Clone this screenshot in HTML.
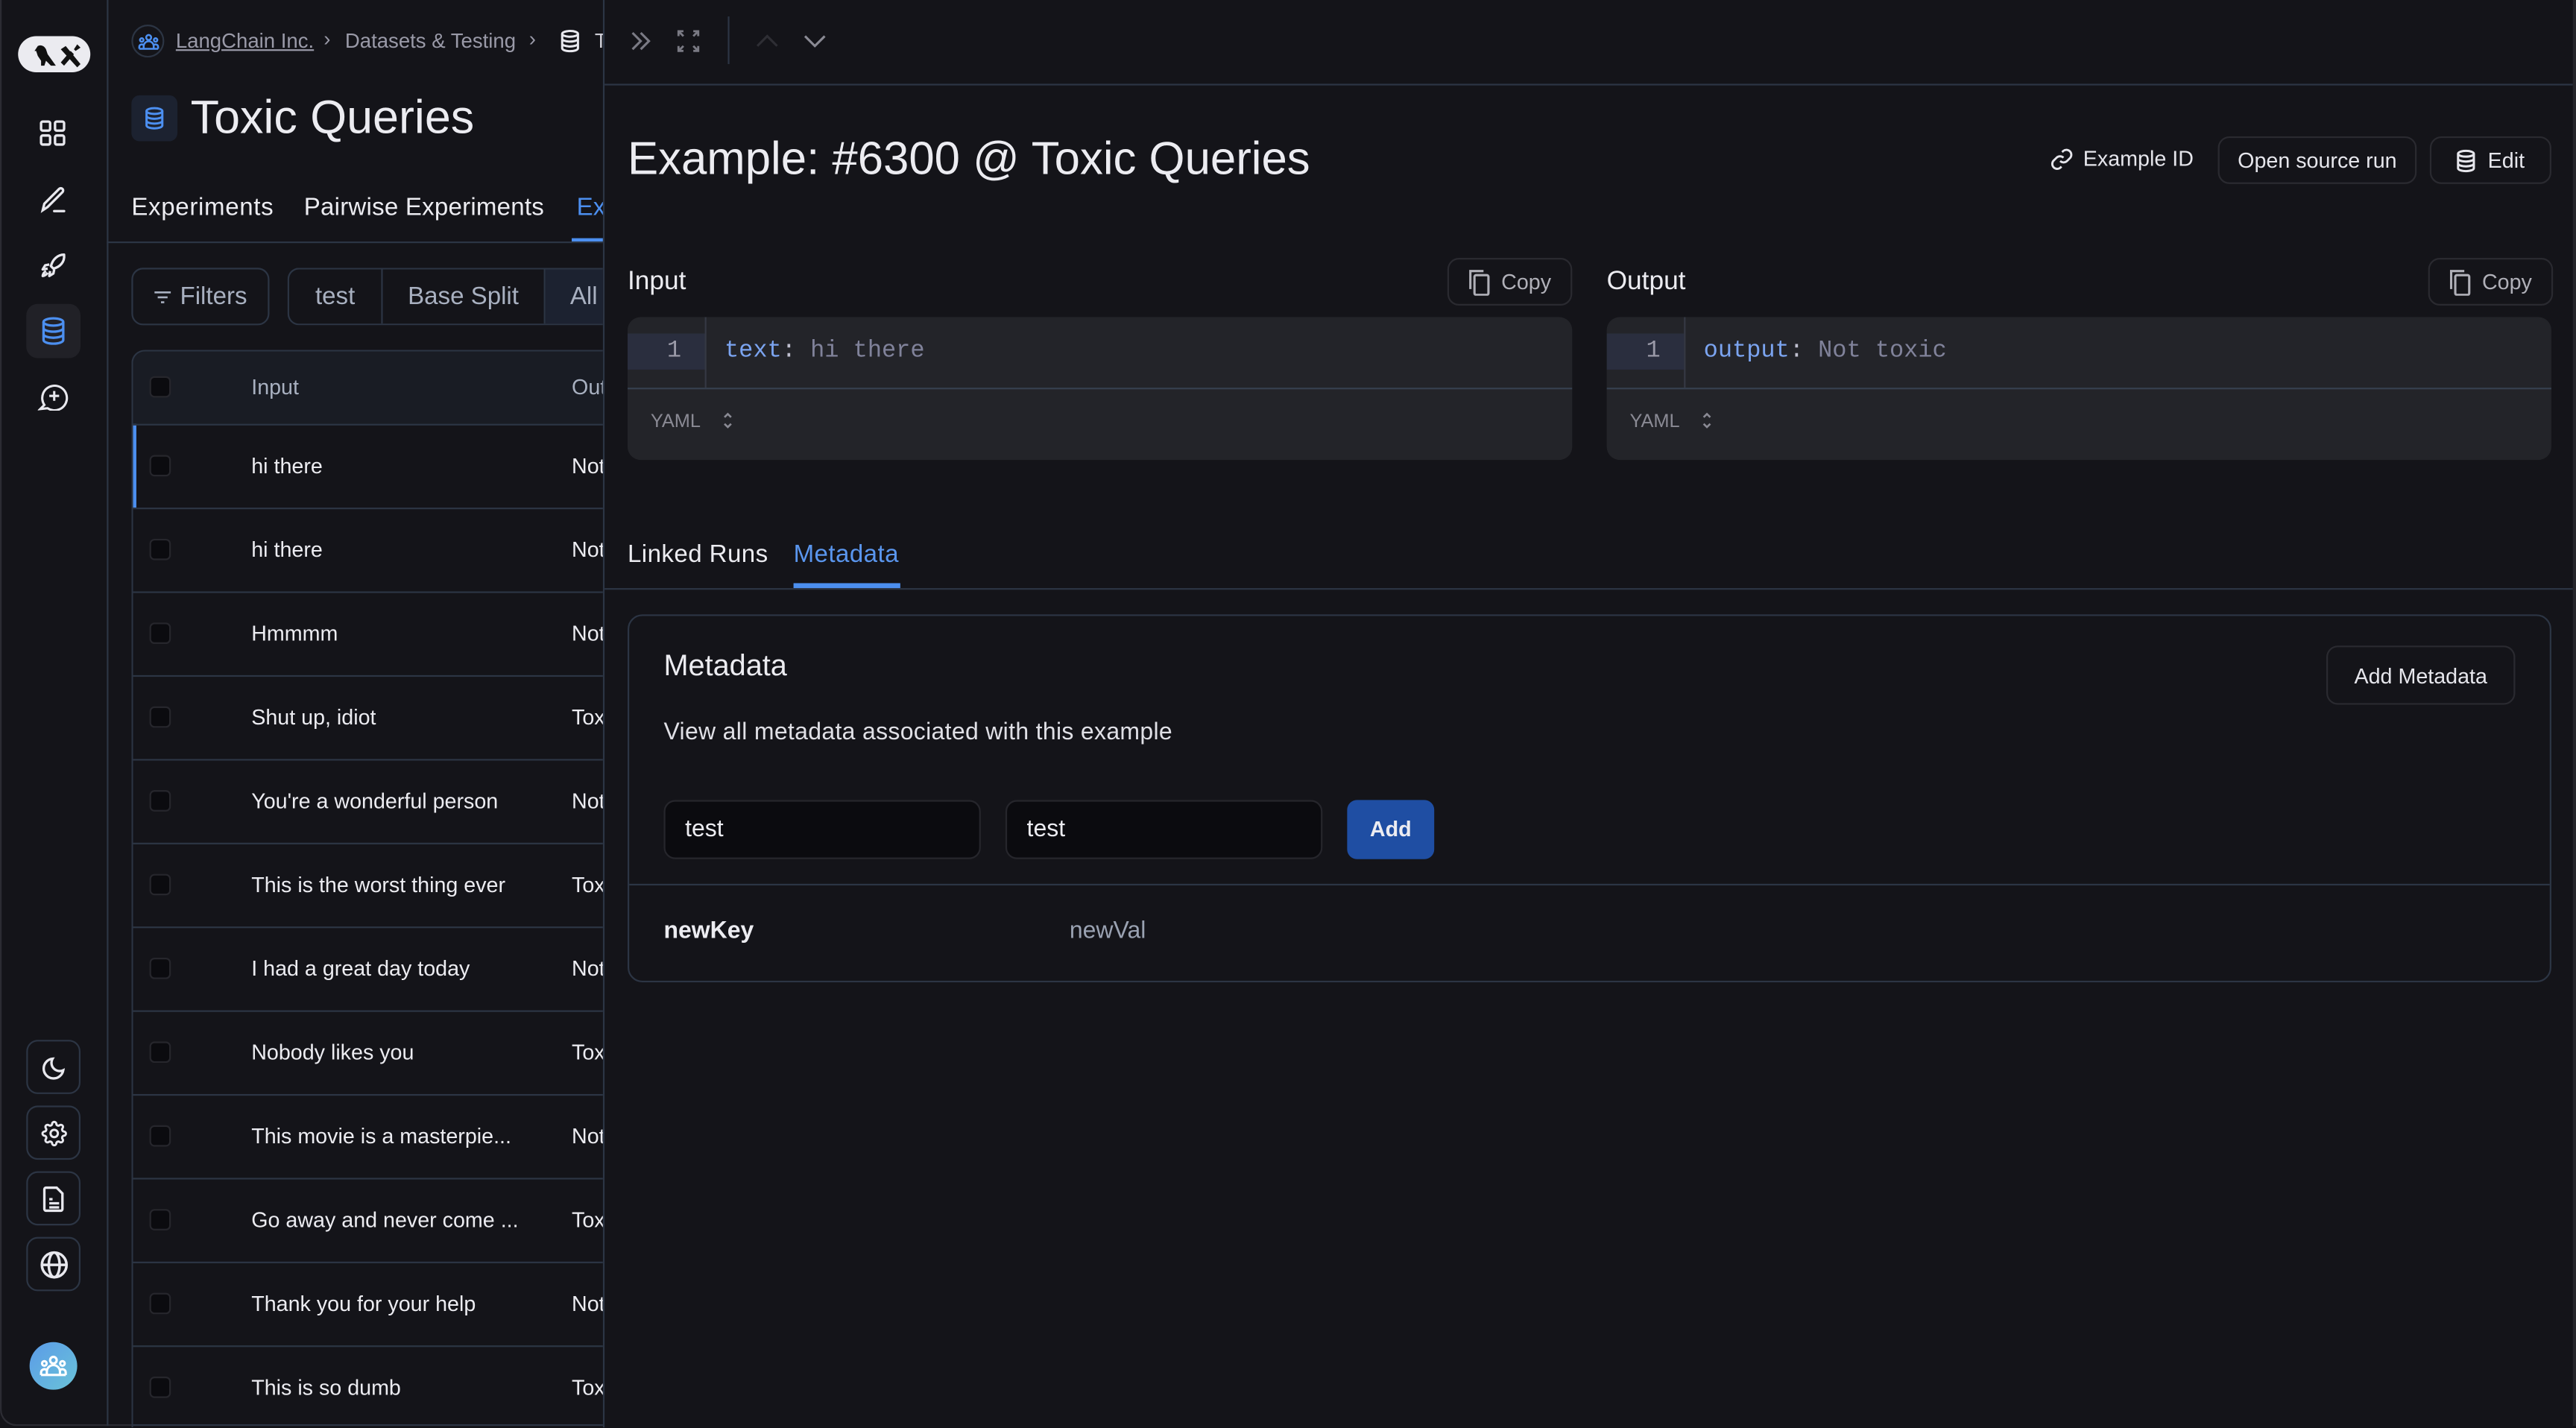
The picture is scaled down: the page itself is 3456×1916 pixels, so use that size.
<!DOCTYPE html>
<html><head><meta charset="utf-8"><style>
*{box-sizing:border-box;margin:0;padding:0}
html,body{width:3456px;height:1916px;overflow:hidden;background:#141419}
#w{position:absolute;left:0;top:0;width:1568px;height:869px;transform:scale(2.2041);transform-origin:0 0;background:#141419;font-family:"Liberation Sans",sans-serif;color:#ececf1;overflow:hidden}
.a{position:absolute;white-space:nowrap}
.ln{position:absolute;background:#2c3544}
.btn{position:absolute;border:1px solid #2a2a30;border-radius:7px;font-size:13px;color:#e6e6ec;display:flex;align-items:center;justify-content:center;gap:7px;white-space:nowrap}
.ib{position:absolute;left:16px;width:33px;height:33px;border:1px solid #2c3544;border-radius:7px;display:flex;align-items:center;justify-content:center}
.cb{position:absolute;left:91px;width:13px;height:13px;border:1px solid #26262c;border-radius:3px;background:#0b0b0f}
.row{position:absolute;left:81px;width:286px;height:51px;border-top:1px solid #2c3544;font-size:13px;white-space:nowrap;overflow:hidden}
.row .t{position:absolute;left:72px;top:17px}
.row .o{position:absolute;left:267px;top:17px}
.mono{font-family:"Liberation Mono",monospace}
svg{display:block}
</style></head><body><div id="w">

<div class="a" style="left:0;top:-10px;width:1566px;height:878px;border:1px solid #2c2c33;border-radius:0 0 0 10px"></div>
<div class="a" style="left:1566px;top:0;width:2px;height:868px;background:#26262b"></div>

<!-- sidebar -->
<div class="ln" style="left:65px;top:0;width:1px;height:868px"></div>
<div class="a" style="left:11px;top:22px;width:44px;height:22px;border-radius:11px;background:#ebebf0"><svg width="44" height="22" viewBox="0 0 44 22"><path d="M12 6c2-1 4 0 5 2l1 3 5 7h-3l-3-3-1 3h-2l0-3-2-3-1-3-1 0z" fill="#111"/><path d="M26 8l3-2 9 11-2 2zM36 5l-2 3 1 1 3-2zM26 16l6-7 2 2-6 7z" fill="#111"/></svg></div>
<div class="a" style="left:24px;top:73px"><svg width="16" height="16" viewBox="0 0 16 16" fill="none" stroke="#e8e8ee" stroke-width="1.5"><rect x="1" y="1" width="5.5" height="5.5" rx="1"/><rect x="9.5" y="1" width="5.5" height="5.5" rx="1"/><rect x="1" y="9.5" width="5.5" height="5.5" rx="1"/><rect x="9.5" y="9.5" width="5.5" height="5.5" rx="1"/></svg></div>
<div class="a" style="left:24px;top:113px"><svg width="17" height="17" viewBox="0 0 17 17" fill="none" stroke="#e8e8ee" stroke-width="1.5" stroke-linecap="round"><path d="M2 15l1-4 9-9a1.4 1.4 0 012 2l-9 9z"/><path d="M9 15.5h6"/></svg></div>
<div class="a" style="left:24px;top:153px"><svg width="17" height="17" viewBox="0 0 17 17" fill="none" stroke="#e8e8ee" stroke-width="1.5" stroke-linejoin="round"><path d="M15 2c-4 0-7 3-8 7l1.5 1.5c4-1 7-4 6.5-8.5z"/><path d="M6 8L3.5 8.5 2 11l3-.5"/><path d="M9 11l-.5 2.5L6 15l.5-3"/><path d="M4 12c-1 .5-2 2-2 3 1 0 2.5-1 3-2"/></svg></div>
<div class="a" style="left:16px;top:185px;width:33px;height:33px;border-radius:7px;background:#212127"></div>
<div class="a" style="left:25px;top:193px"><svg width="15" height="17" viewBox="0 0 15 17" fill="none" stroke="#4c8ff0" stroke-width="1.5"><ellipse cx="7.5" cy="3" rx="6" ry="2.2"/><path d="M1.5 3v11c0 1.2 2.7 2.2 6 2.2s6-1 6-2.2V3M1.5 6.7c0 1.2 2.7 2.2 6 2.2s6-1 6-2.2M1.5 10.4c0 1.2 2.7 2.2 6 2.2s6-1 6-2.2"/></svg></div>
<div class="a" style="left:23px;top:232px"><svg width="19" height="18" viewBox="0 0 19 18" fill="none" stroke="#e8e8ee" stroke-width="1.4"><path d="M4 14.5A7.5 7.5 0 1 1 6 16.5L1.5 17z"/><path d="M10 6v6M7 9h6"/></svg></div>

<div class="ib" style="top:633px"><svg width="16" height="16" viewBox="0 0 16 16" fill="none" stroke="#e8e8ee" stroke-width="1.5"><path d="M13.5 9.5A6 6 0 1 1 7 2.5a5 5 0 0 0 6.5 7z"/></svg></div>
<div class="ib" style="top:673px"><svg width="18" height="18" viewBox="0 0 24 24" fill="none" stroke="#e8e8ee" stroke-width="1.8"><path d="M10.3 4.3a1.7 1.7 0 013.4 0 1.7 1.7 0 002.6 1.1 1.7 1.7 0 012.4 2.4 1.7 1.7 0 001.1 2.6 1.7 1.7 0 010 3.4 1.7 1.7 0 00-1.1 2.6 1.7 1.7 0 01-2.4 2.4 1.7 1.7 0 00-2.6 1.1 1.7 1.7 0 01-3.4 0 1.7 1.7 0 00-2.6-1.1 1.7 1.7 0 01-2.4-2.4 1.7 1.7 0 00-1.1-2.6 1.7 1.7 0 010-3.4 1.7 1.7 0 001.1-2.6 1.7 1.7 0 012.4-2.4 1.7 1.7 0 002.6-1.1z"/><circle cx="12" cy="12" r="3"/></svg></div>
<div class="ib" style="top:713px"><svg width="14" height="16" viewBox="0 0 14 16" fill="none" stroke="#e8e8ee" stroke-width="1.5"><path d="M2 1h6.5L12 4.5V14a1 1 0 01-1 1H2a1 1 0 01-1-1V2a1 1 0 011-1z"/><path d="M4 8h2M4 10.5h6M4 13h6"/></svg></div>
<div class="ib" style="top:753px"><svg width="18" height="18" viewBox="0 0 18 18" fill="none" stroke="#e8e8ee" stroke-width="1.6"><circle cx="9" cy="9" r="7.5"/><ellipse cx="9" cy="9" rx="3.3" ry="7.5"/><path d="M1.5 9h15"/></svg></div>
<div class="a" style="left:18px;top:817px;width:29px;height:29px;border-radius:50%;background:linear-gradient(135deg,#5b9be8,#6ac3d8);display:flex;align-items:center;justify-content:center"><svg width="17" height="13" viewBox="0 0 17 13" fill="none" stroke="#fff" stroke-width="1.4"><circle cx="8.5" cy="3" r="2"/><circle cx="3" cy="5" r="1.4"/><circle cx="14" cy="5" r="1.4"/><path d="M4.5 12V10a4 4 0 018 0v2zM1 12v-1.5a2 2 0 013.5-1.3M16 12v-1.5a2 2 0 00-3.5-1.3M1 12h15"/></svg></div>

<!-- middle panel -->
<div class="a" style="left:80px;top:15px;width:20px;height:20px;border:1px solid #2c3544;border-radius:50%;display:flex;align-items:center;justify-content:center"><svg width="13" height="11" viewBox="0 0 17 13" fill="none" stroke="#4c8ff0" stroke-width="1.5"><circle cx="8.5" cy="3" r="2"/><circle cx="3" cy="5" r="1.4"/><circle cx="14" cy="5" r="1.4"/><path d="M4.5 12V10a4 4 0 018 0v2zM1 12v-1.5a2 2 0 013.5-1.3M16 12v-1.5a2 2 0 00-3.5-1.3M1 12h15"/></svg></div>
<div class="a" style="left:107px;top:18px;font-size:12.5px;color:#9a9aa8;text-decoration:underline">LangChain Inc.</div>
<div class="a" style="left:197px;top:17px;font-size:12.5px;color:#9a9aa8">›</div>
<div class="a" style="left:210px;top:18px;font-size:12.5px;color:#9a9aa8">Datasets &amp; Testing</div>
<div class="a" style="left:322px;top:17px;font-size:12.5px;color:#9a9aa8">›</div>
<div class="a" style="left:341px;top:18px"><svg width="12" height="14" viewBox="0 0 15 17" fill="none" stroke="#e8e8ee" stroke-width="1.7"><ellipse cx="7.5" cy="3" rx="6" ry="2.2"/><path d="M1.5 3v11c0 1.2 2.7 2.2 6 2.2s6-1 6-2.2V3M1.5 6.7c0 1.2 2.7 2.2 6 2.2s6-1 6-2.2M1.5 10.4c0 1.2 2.7 2.2 6 2.2s6-1 6-2.2"/></svg></div>
<div class="a" style="left:362px;top:18px;font-size:12.5px;color:#ccccd4">Toxic</div>
<div class="a" style="left:80px;top:58px;width:28px;height:28px;border-radius:5px;background:#1c2230;display:flex;align-items:center;justify-content:center"><svg width="12" height="14" viewBox="0 0 15 17" fill="none" stroke="#4c8ff0" stroke-width="1.7"><ellipse cx="7.5" cy="3" rx="6" ry="2.2"/><path d="M1.5 3v11c0 1.2 2.7 2.2 6 2.2s6-1 6-2.2V3M1.5 6.7c0 1.2 2.7 2.2 6 2.2s6-1 6-2.2M1.5 10.4c0 1.2 2.7 2.2 6 2.2s6-1 6-2.2"/></svg></div>
<div class="a" style="left:116px;top:56px;font-size:28.5px;font-weight:500">Toxic Queries</div>
<div class="a" style="left:80px;top:118px;font-size:15px;letter-spacing:.3px">Experiments</div>
<div class="a" style="left:185px;top:118px;font-size:15px;letter-spacing:.1px">Pairwise Experiments</div>
<div class="a" style="left:351px;top:118px;font-size:15px;color:#4c8ff0">Examples</div>
<div class="ln" style="left:65px;top:147px;width:302px;height:1px"></div>
<div class="a" style="left:348px;top:145px;width:20px;height:2px;background:#4c8ff0"></div>
<div class="a" style="left:80px;top:163px;width:84px;height:35px;border:1px solid #2c3544;border-radius:7px;font-size:15px;color:#a8b0c0;display:flex;align-items:center;justify-content:center;gap:6px"><svg width="10" height="8" viewBox="0 0 10 8" stroke="#a8b0c0" stroke-width="1.2"><path d="M0 1h10M2 4h6M4 7h2"/></svg>Filters</div>
<div class="a" style="left:175px;top:163px;width:192px;height:35px;border:1px solid #2c3544;border-right:none;border-radius:7px 0 0 7px;overflow:hidden;font-size:15px;color:#a8b0c0">
 <div class="a" style="left:0;top:0;width:57px;height:33px;border-right:1px solid #2c3544;text-align:center;line-height:33px">test</div>
 <div class="a" style="left:57px;top:0;width:99px;height:33px;border-right:1px solid #2c3544;text-align:center;line-height:33px">Base Split</div>
 <div class="a" style="left:156px;top:0;width:40px;height:33px;background:#1c2230;padding-left:15px;line-height:33px">All</div>
</div>
<div class="a" style="left:80px;top:213px;width:287px;height:656px;border:1px solid #2c3544;border-right:none;border-bottom:none;border-radius:8px 0 0 0;overflow:hidden">
 <div class="a" style="left:0;top:0;width:287px;height:45px;background:#191c24"></div>
</div>
<div class="cb" style="top:229px"></div>
<div class="a" style="left:153px;top:228px;font-size:13px;color:#a8b0c0">Input</div>
<div class="a" style="left:348px;top:228px;font-size:13px;color:#a8b0c0;width:19px;overflow:hidden">Output</div>
<div class="a" style="left:81px;top:258px;width:2px;height:51px;background:#4c8ff0"></div>
<div class="row" style="top:258px"><div class="cb" style="left:10px;top:18px"></div><span class="t">hi there</span><span class="o">Not toxic</span></div>
<div class="row" style="top:309px"><div class="cb" style="left:10px;top:18px"></div><span class="t">hi there</span><span class="o">Not toxic</span></div>
<div class="row" style="top:360px"><div class="cb" style="left:10px;top:18px"></div><span class="t">Hmmmm</span><span class="o">Not toxic</span></div>
<div class="row" style="top:411px"><div class="cb" style="left:10px;top:18px"></div><span class="t">Shut up, idiot</span><span class="o">Toxic</span></div>
<div class="row" style="top:462px"><div class="cb" style="left:10px;top:18px"></div><span class="t">You're a wonderful person</span><span class="o">Not toxic</span></div>
<div class="row" style="top:513px"><div class="cb" style="left:10px;top:18px"></div><span class="t">This is the worst thing ever</span><span class="o">Toxic</span></div>
<div class="row" style="top:564px"><div class="cb" style="left:10px;top:18px"></div><span class="t">I had a great day today</span><span class="o">Not toxic</span></div>
<div class="row" style="top:615px"><div class="cb" style="left:10px;top:18px"></div><span class="t">Nobody likes you</span><span class="o">Toxic</span></div>
<div class="row" style="top:666px"><div class="cb" style="left:10px;top:18px"></div><span class="t">This movie is a masterpie...</span><span class="o">Not toxic</span></div>
<div class="row" style="top:717px"><div class="cb" style="left:10px;top:18px"></div><span class="t">Go away and never come ...</span><span class="o">Toxic</span></div>
<div class="row" style="top:768px"><div class="cb" style="left:10px;top:18px"></div><span class="t">Thank you for your help</span><span class="o">Not toxic</span></div>
<div class="row" style="top:819px;height:48px"><div class="cb" style="left:10px;top:18px"></div><span class="t">This is so dumb</span><span class="o">Toxic</span></div>
<div class="ln" style="left:81px;top:867px;width:286px;height:1px"></div>

<!-- right panel -->
<div class="a" style="left:367px;top:0;width:1199px;height:869px;background:#141419;border-left:1px solid #2c3544"></div>
<div class="ln" style="left:368px;top:51px;width:1198px;height:1px"></div>
<div class="a" style="left:383px;top:18px"><svg width="14" height="14" viewBox="0 0 14 14" fill="none" stroke="#7a7a84" stroke-width="1.4"><path d="M2 2l5 5-5 5M7 2l5 5-5 5"/></svg></div>
<div class="a" style="left:412px;top:18px"><svg width="14" height="14" viewBox="0 0 14 14" fill="none" stroke="#7a7a84" stroke-width="1.3"><path d="M1 4V1h3M1 1l3 3M13 4V1h-3M13 1l-3 3M1 10v3h3M1 13l3-3M13 10v3h-3M13 13l-3-3"/></svg></div>
<div class="a" style="left:443px;top:10px;width:1px;height:29px;background:#2c3544"></div>
<div class="a" style="left:460px;top:21px"><svg width="14" height="8" viewBox="0 0 14 8" fill="none" stroke="#2e2e34" stroke-width="1.4"><path d="M1 7l6-6 6 6"/></svg></div>
<div class="a" style="left:489px;top:21px"><svg width="14" height="8" viewBox="0 0 14 8" fill="none" stroke="#8a8a94" stroke-width="1.4"><path d="M1 1l6 6 6-6"/></svg></div>

<div class="a" style="left:382px;top:81px;font-size:28px;font-weight:500">Example: #6300 @ Toxic Queries</div>
<div class="a" style="left:1248px;top:89px;font-size:13px;color:#e6e6ec;display:flex;gap:6px;align-items:center"><svg width="14" height="14" viewBox="0 0 14 14" fill="none" stroke="#e6e6ec" stroke-width="1.3"><path d="M6 8a3 3 0 004.2 0l2-2a3 3 0 00-4.2-4.2L7.2 2.6M8 6a3 3 0 00-4.2 0l-2 2A3 3 0 006 12.2l.8-.8"/></svg>Example ID</div>
<div class="btn" style="left:1350px;top:83px;width:121px;height:29px">Open source run</div>
<div class="btn" style="left:1479px;top:83px;width:74px;height:29px"><svg width="12" height="14" viewBox="0 0 15 17" fill="none" stroke="#e6e6ec" stroke-width="1.7"><ellipse cx="7.5" cy="3" rx="6" ry="2.2"/><path d="M1.5 3v11c0 1.2 2.7 2.2 6 2.2s6-1 6-2.2V3M1.5 6.7c0 1.2 2.7 2.2 6 2.2s6-1 6-2.2M1.5 10.4c0 1.2 2.7 2.2 6 2.2s6-1 6-2.2"/></svg>Edit</div>

<!-- input -->
<div class="a" style="left:382px;top:163px;font-size:16px">Input</div>
<div class="btn" style="left:881px;top:157px;width:76px;height:29px;color:#b0b0b8"><svg width="13" height="16" viewBox="0 0 13 16" fill="none" stroke="#b0b0b8" stroke-width="1.4"><path d="M1 12V1h8"/><rect x="3.5" y="3.5" width="8.5" height="12" rx="1"/></svg>Copy</div>
<div class="a" style="left:382px;top:193px;width:575px;height:87px;background:#232429;border-radius:8px;overflow:hidden">
 <div class="a" style="left:0;top:10px;width:47px;height:22px;background:#2a2e3e"></div>
 <div class="a" style="left:47px;top:0;width:1px;height:43px;background:#353843"></div>
 <div class="a mono" style="left:24px;top:13px;font-size:14.5px;color:#9a9aa8">1</div>
 <div class="a mono" style="left:59px;top:13px;font-size:14.5px;white-space:pre"><span style="color:#7ba4f0">text</span><span style="color:#c0c0d0">:</span><span style="color:#80829a"> hi there</span></div>
 <div class="a" style="left:0;top:43px;width:575px;height:1px;background:#36404f"></div>
 <div class="a" style="left:14px;top:58px;font-size:11.5px;color:#8a8a94">YAML</div>
 <div class="a" style="left:58px;top:57px"><svg width="6" height="12" viewBox="0 0 6 12" fill="none" stroke="#8a8a94" stroke-width="1.2"><path d="M1 4l2-2 2 2M1 8l2 2 2-2"/></svg></div>
</div>
<!-- output -->
<div class="a" style="left:978px;top:163px;font-size:16px">Output</div>
<div class="btn" style="left:1478px;top:157px;width:76px;height:29px;color:#b0b0b8"><svg width="13" height="16" viewBox="0 0 13 16" fill="none" stroke="#b0b0b8" stroke-width="1.4"><path d="M1 12V1h8"/><rect x="3.5" y="3.5" width="8.5" height="12" rx="1"/></svg>Copy</div>
<div class="a" style="left:978px;top:193px;width:575px;height:87px;background:#232429;border-radius:8px;overflow:hidden">
 <div class="a" style="left:0;top:10px;width:47px;height:22px;background:#2a2e3e"></div>
 <div class="a" style="left:47px;top:0;width:1px;height:43px;background:#353843"></div>
 <div class="a mono" style="left:24px;top:13px;font-size:14.5px;color:#9a9aa8">1</div>
 <div class="a mono" style="left:59px;top:13px;font-size:14.5px;white-space:pre"><span style="color:#7ba4f0">output</span><span style="color:#c0c0d0">:</span><span style="color:#80829a"> Not toxic</span></div>
 <div class="a" style="left:0;top:43px;width:575px;height:1px;background:#36404f"></div>
 <div class="a" style="left:14px;top:58px;font-size:11.5px;color:#8a8a94">YAML</div>
 <div class="a" style="left:58px;top:57px"><svg width="6" height="12" viewBox="0 0 6 12" fill="none" stroke="#8a8a94" stroke-width="1.2"><path d="M1 4l2-2 2 2M1 8l2 2 2-2"/></svg></div>
</div>

<!-- tabs -->
<div class="a" style="left:382px;top:329px;font-size:15px;letter-spacing:.2px">Linked Runs</div>
<div class="a" style="left:483px;top:329px;font-size:15px;color:#5a96ee;letter-spacing:.2px">Metadata</div>
<div class="ln" style="left:368px;top:358px;width:1198px;height:1px"></div>
<div class="a" style="left:483px;top:355px;width:65px;height:3px;background:#4c8ff0"></div>

<!-- metadata card -->
<div class="a" style="left:382px;top:374px;width:1171px;height:224px;border:1px solid #2c3544;border-radius:9px"></div>
<div class="a" style="left:404px;top:395px;font-size:18px">Metadata</div>
<div class="btn" style="left:1416px;top:393px;width:115px;height:36px">Add Metadata</div>
<div class="a" style="left:404px;top:438px;font-size:14.5px;color:#e0e0e6;letter-spacing:.15px">View all metadata associated with this example</div>
<div class="a" style="left:404px;top:487px;width:193px;height:36px;background:#0b0b0f;border:1px solid #26262c;border-radius:7px;font-size:14.5px;padding-left:12px;line-height:34px">test</div>
<div class="a" style="left:612px;top:487px;width:193px;height:36px;background:#0b0b0f;border:1px solid #26262c;border-radius:7px;font-size:14.5px;padding-left:12px;line-height:34px">test</div>
<div class="a" style="left:820px;top:487px;width:53px;height:36px;background:#1f4ea3;border-radius:6px;font-size:13px;font-weight:bold;text-align:center;line-height:36px">Add</div>
<div class="ln" style="left:383px;top:538px;width:1169px;height:1px"></div>
<div class="a" style="left:404px;top:559px;font-size:14.5px;font-weight:bold">newKey</div>
<div class="a" style="left:651px;top:559px;font-size:14.5px;color:#9aa2b2">newVal</div>

</div></body></html>
